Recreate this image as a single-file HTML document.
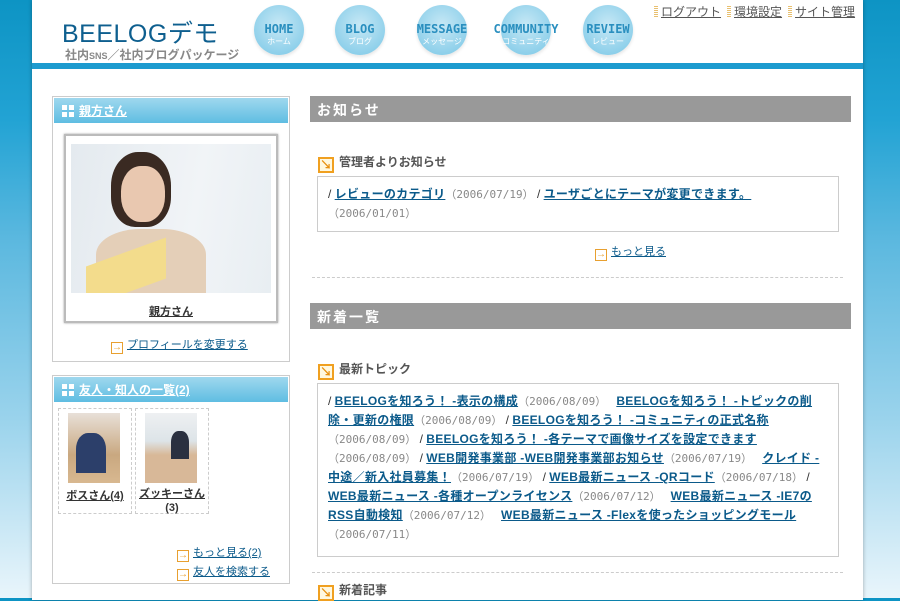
<!DOCTYPE html>
<html><head><meta charset="utf-8"><style>
*{margin:0;padding:0;box-sizing:border-box}
body{width:900px;height:598px;overflow:hidden;font-family:"Liberation Sans","Noto Sans CJK JP",sans-serif;font-size:12px;color:#333;
background:linear-gradient(#0d94c4 0%,#22a3d4 20%,#5bb8df 40%,#9ad3ec 70%,#e9f5fb 100%);position:relative}
.page{position:absolute;left:32px;top:0;width:831px;height:600px;background:#fff;box-shadow:0 0 4px rgba(0,0,0,.3)}
.abs{position:absolute}
.topbar{left:0;top:63px;width:831px;height:6px;background:#1d9bcf}
.logo{left:30px;top:14px;font-size:25px;color:#0e5f8f;letter-spacing:0.5px}
.sub{left:33px;top:46px;font-size:12px;color:#888;font-weight:bold}
.nav{width:50px;height:50px;border-radius:50%;background:radial-gradient(circle at 50% 40%,#c7e8f5,#8ccfea 75%,#7cc6e6);top:5px;text-align:center;box-shadow:0 2px 3px rgba(0,0,0,.1)}
.nav b{display:block;margin-top:17px;font-size:12px;color:#2a8fbf;font-family:"DejaVu Sans Mono",monospace;white-space:nowrap;margin-left:-20px;margin-right:-20px}
.nav i{display:block;font-style:normal;font-size:8px;color:#fff}
.tl{top:3px;font-size:12px;color:#555}
.tl span{display:inline-block;width:4px;height:11px;background:repeating-linear-gradient(#e8c070 0 1px,#fff 1px 2px);margin-right:3px;vertical-align:-1px}
.tl a{color:#555;text-decoration:underline;margin-right:6px}
.box{border:1px solid #ccc;background:#fff}
.bh{height:25px;margin:1px;background:linear-gradient(#9fd8ee,#5fbde2);color:#fff;font-weight:bold;font-size:12px;padding:4px 0 0 8px}
.bh .sq{display:inline-block;width:12px;height:12px;background:linear-gradient(90deg,#fff 5px,transparent 5px,transparent 7px,#fff 7px);vertical-align:-2px;margin-right:5px;position:relative}
.bh .sq:after{content:"";position:absolute;left:0;top:5px;width:12px;height:2px;background:#6fc3e6}
.bh u{color:#fff}
a{color:#0b5a8a;text-decoration:underline}
.arr{display:inline-block;width:12px;height:12px;border:1px solid #e8a030;color:#e8a030;font-size:10px;line-height:10px;text-align:center;vertical-align:-2px;margin-right:4px}
.gbar{background:#999;color:#fff;font-size:14px;font-weight:bold;height:26px;padding:4px 0 0 7px;letter-spacing:2px}
.h3{font-size:12px;font-weight:bold;color:#555}
.h3 .ic{display:inline-block;width:16px;height:16px;border:2px solid #f0a020;background:#fff8e0;color:#e89010;font-size:12px;line-height:12px;text-align:center;vertical-align:-3px;margin-right:5px;font-weight:bold}
.ib{border:1px solid #ccc;padding:8px 10px;line-height:19px}
.ib a{font-weight:bold;color:#0b5a8a;letter-spacing:0.3px}
.d{color:#888;font-size:11px;font-family:"DejaVu Sans Mono",monospace}
.dash{border-top:1px dashed #ccc;height:0}
</style></head><body>
<div class="page">
<div class="abs logo">BEELOGデモ</div>
<div class="abs sub">社内<span style="font-size:9px">SNS</span>／社内ブログパッケージ</div>
<div class="abs nav" style="left:222px"><b>HOME</b><i>ホーム</i></div>
<div class="abs nav" style="left:303px"><b>BLOG</b><i>ブログ</i></div>
<div class="abs nav" style="left:385px"><b>MESSAGE</b><i>メッセージ</i></div>
<div class="abs nav" style="left:469px"><b>COMMUNITY</b><i>コミュニティ</i></div>
<div class="abs nav" style="left:551px"><b>REVIEW</b><i>レビュー</i></div>
<div class="abs tl" style="left:622px"><span></span><a>ログアウト</a><span></span><a>環境設定</a><span></span><a>サイト管理</a></div>
<div class="abs topbar"></div>

<div class="abs box" style="left:20px;top:96px;width:238px;height:266px">
<div class="bh"><span class="sq"></span><u>親方さん</u></div>
<div class="abs" style="left:11px;top:37px;width:214px;height:189px;border:2px solid #bbb;box-shadow:0 0 2px #999;background:#fff">
<div class="abs" style="left:5px;top:8px;width:200px;height:149px;background:linear-gradient(100deg,#e4eaef 0%,#f1f4f7 60%,#e8eef2 100%);overflow:hidden">
<div class="abs" style="left:40px;top:8px;width:60px;height:75px;border-radius:45% 45% 40% 40%;background:#3a2a22"></div>
<div class="abs" style="left:50px;top:22px;width:44px;height:56px;border-radius:45%;background:#e9c8b0"></div>
<div class="abs" style="left:25px;top:85px;width:110px;height:64px;border-radius:40% 40% 0 0;background:#e4cfb8"></div>
<div class="abs" style="left:15px;top:108px;width:80px;height:41px;background:#f3dc8c;transform:skewY(-20deg)"></div>
</div>
<div class="abs" style="left:0;top:167px;width:210px;text-align:center;font-weight:bold;font-size:11px"><u>親方さん</u></div>
</div>
<div class="abs" style="left:58px;top:239px"><span class="arr">→</span><a style="font-size:11px">プロフィールを変更する</a></div>
</div>

<div class="abs box" style="left:20px;top:375px;width:238px;height:209px">
<div class="bh"><span class="sq"></span><u>友人・知人の一覧(2)</u></div>
<div class="abs" style="left:5px;top:32px;width:74px;height:106px;border:1px dashed #ccc">
<div class="abs" style="left:9px;top:4px;width:52px;height:70px;background:linear-gradient(#e8e0d8,#c9a880 60%,#d8b890)"><div class="abs" style="left:8px;top:20px;width:30px;height:40px;background:#2c3f6a;border-radius:40% 40% 0 0"></div></div>
<div class="abs" style="left:0;top:78px;width:72px;text-align:center;font-weight:bold;font-size:11px"><u>ボスさん(4)</u></div></div>
<div class="abs" style="left:82px;top:32px;width:74px;height:106px;border:1px dashed #ccc">
<div class="abs" style="left:9px;top:4px;width:52px;height:70px;background:linear-gradient(#eef0f2,#dde4e8 40%,#d8b898 60%)"><div class="abs" style="left:26px;top:18px;width:18px;height:28px;background:#2a3040;border-radius:40% 40% 0 0"></div></div>
<div class="abs" style="left:0;top:78px;width:72px;text-align:center;font-weight:bold;font-size:11px;line-height:14px"><u>ズッキーさん</u><br>(3)</div></div>
<div class="abs" style="left:124px;top:168px;line-height:19px;font-size:11px"><span class="arr">→</span><a>もっと見る(2)</a><br><span class="arr">→</span><a>友人を検索する</a></div>
</div>

<div class="abs gbar" style="left:278px;top:96px;width:541px">お知らせ</div>
<div class="abs h3" style="left:286px;top:153px"><span class="ic">↘</span>管理者よりお知らせ</div>
<div class="abs ib" style="left:285px;top:176px;width:522px;height:56px;padding-top:8px">/ <a>レビューのカテゴリ</a><span class="d">（2006/07/19）</span> / <a>ユーザごとにテーマが変更できます。</a><br><span class="d">（2006/01/01）</span></div>
<div class="abs" style="left:563px;top:243px;font-size:11px"><span class="arr">→</span><a>もっと見る</a></div>
<div class="abs dash" style="left:280px;top:277px;width:531px"></div>
<div class="abs gbar" style="left:278px;top:303px;width:541px">新着一覧</div>
<div class="abs h3" style="left:286px;top:360px"><span class="ic">↘</span>最新トピック</div>
<div class="abs ib" style="left:285px;top:383px;width:522px;height:174px">/ <a>BEELOGを知ろう！ -表示の構成</a><span class="d">（2006/08/09）</span>&nbsp;&nbsp; <a>BEELOGを知ろう！ -トピックの削除・更新の権限</a><span class="d">（2006/08/09）</span> / <a>BEELOGを知ろう！ -コミュニティの正式名称</a><span class="d">（2006/08/09）</span> / <a>BEELOGを知ろう！ -各テーマで画像サイズを設定できます</a><span class="d">（2006/08/09）</span> / <a>WEB開発事業部 -WEB開発事業部お知らせ</a><span class="d">（2006/07/19）</span>&nbsp;&nbsp; <a>クレイド -中途／新入社員募集！</a><span class="d">（2006/07/19）</span> / <a>WEB最新ニュース -QRコード</a><span class="d">（2006/07/18）</span> / <a>WEB最新ニュース -各種オープンライセンス</a><span class="d">（2006/07/12）</span>&nbsp;&nbsp; <a>WEB最新ニュース -IE7のRSS自動検知</a><span class="d">（2006/07/12）</span>&nbsp;&nbsp; <a>WEB最新ニュース -Flexを使ったショッピングモール</a><span class="d">（2006/07/11）</span></div>
<div class="abs dash" style="left:280px;top:572px;width:531px"></div>
<div class="abs h3" style="left:286px;top:581px"><span class="ic">↘</span>新着記事</div>
</div>
</body></html>
